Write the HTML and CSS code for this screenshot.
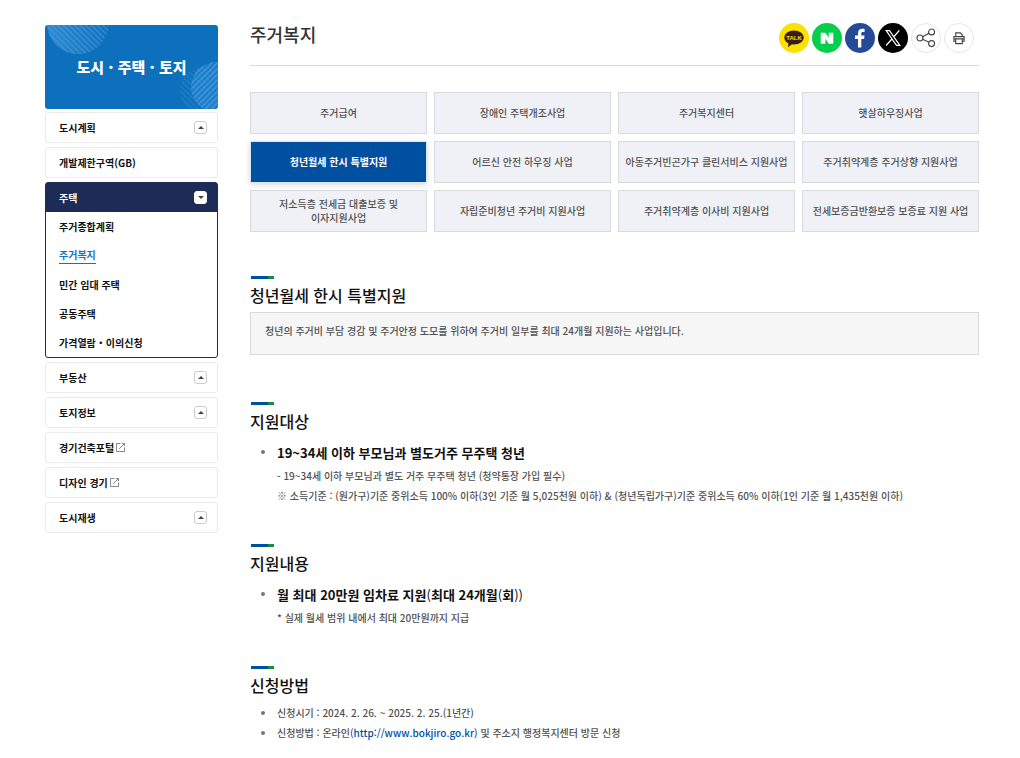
FILE: index.html
```html
<!DOCTYPE html>
<html lang="ko">
<head>
  <meta charset="UTF-8">
  <meta name="viewport" content="width=device-width, initial-scale=1.0">
  <title>주거복지</title>
  <link rel="stylesheet" href="styles.css">
</head>
<body>
  <div class="container">
    <!-- Left menu -->
    <aside class="sidebar">
      <div class="banner">
        <svg class="banner-bg" viewBox="0 0 173 84" preserveAspectRatio="none" aria-hidden="true">
          <defs>
            <pattern id="stripe" width="4" height="4" patternUnits="userSpaceOnUse" patternTransform="rotate(45)">
              <rect width="1.5" height="4" fill="#5eaae6"/>
            </pattern>
            <pattern id="stripeBack" width="4" height="4" patternUnits="userSpaceOnUse" patternTransform="rotate(-45)">
              <rect width="1.5" height="4" fill="#5eaae6"/>
            </pattern>
            <linearGradient id="fade">
              <stop offset="0" stop-color="#3a93d8"/>
              <stop offset="1" stop-color="#0d70bd"/>
            </linearGradient>
          </defs>
          <circle cx="33" cy="-2" r="31" fill="url(#fade)" opacity=".7"/>
          <circle cx="33" cy="-2" r="31" fill="url(#stripeBack)" opacity=".45"/>
          <circle cx="159" cy="66" r="24" fill="url(#stripeBack)" opacity=".25"/>
          <circle cx="171" cy="62" r="25" fill="#2583cf" opacity=".5"/>
          <circle cx="171" cy="62" r="25" fill="url(#stripe)" opacity=".6"/>
        </svg>
        <strong>도시 · 주택 · 토지</strong>
      </div>
      <ul class="menu">
        <li class="item"><a href="#">도시계획</a><button type="button" class="toggle" aria-label="도시계획 펼치기"></button></li>
        <li class="item"><a href="#">개발제한구역(GB)</a></li>
        <li class="group">
          <div class="group-head"><a href="#">주택</a><button type="button" class="toggle down" aria-label="주택 접기"></button></div>
          <ul class="submenu">
            <li><a href="#">주거종합계획</a></li>
            <li><a href="#" class="current">주거복지</a></li>
            <li><a href="#">민간 임대 주택</a></li>
            <li><a href="#">공동주택</a></li>
            <li><a href="#">가격열람・이의신청</a></li>
          </ul>
        </li>
        <li class="item"><a href="#">부동산</a><button type="button" class="toggle" aria-label="부동산 펼치기"></button></li>
        <li class="item"><a href="#">토지정보</a><button type="button" class="toggle" aria-label="토지정보 펼치기"></button></li>
        <li class="item">
          <a href="#">경기건축포털<svg class="ext" viewBox="0 0 10 10" aria-hidden="true"><path d="M5 .5H.5v9h9V5M6.5.5h3v3M9.5.5l-6 6"/></svg></a>
        </li>
        <li class="item">
          <a href="#">디자인 경기<svg class="ext" viewBox="0 0 10 10" aria-hidden="true"><path d="M5 .5H.5v9h9V5M6.5.5h3v3M9.5.5l-6 6"/></svg></a>
        </li>
        <li class="item"><a href="#">도시재생</a><button type="button" class="toggle" aria-label="도시재생 펼치기"></button></li>
      </ul>
    </aside>

    <main class="content">
      <header class="page-head">
        <h1>주거복지</h1>
        <div class="share">
          <a href="#" class="kakao" aria-label="카카오톡">
            <svg viewBox="0 0 30 30">
              <path fill="#3b1c1c" d="M15 7.5c-5.4 0-9.700 3.100-9.700 7 0 2.500 1.700 4.600 4.200 5.900l-.6 3.900 4.100-3c.6.1 1.300.2 2 .2 5.400 0 9.700-3.100 9.700-7s-4.300-7-9.700-7z"/>
              <text x="15" y="17" text-anchor="middle" class="talk">TALK</text>
            </svg>
          </a>
          <a href="#" class="naver" aria-label="네이버">
            <svg viewBox="0 0 30 30"><path fill="#fff" d="M8.700 9.700h4.600l3.400 4.900V9.700h4.600v11h-4.600l-3.400-4.900v4.900H8.700z"/></svg>
          </a>
          <a href="#" class="facebook" aria-label="페이스북">
            <svg viewBox="0 0 30 30"><path fill="#fff" d="M13 24.500v-8.600h-3v-3.400h3v-2.300c0-3 1.800-4.400 4.300-4.400 1.200 0 2 .1 2.300.1v3.100h-1.700c-1.300 0-1.600.7-1.600 1.600v1.900h3.200l-.4 3.400h-2.800v8.600z"/></svg>
          </a>
          <a href="#" class="x" aria-label="X">
            <svg viewBox="0 0 30 30">
              <path fill="none" stroke="#fff" stroke-width="1.2" d="M8.200 7.700h3.300l10.300 14.600h-3.300zM21.300 7.500l-5.700 6.500M13.900 16l-5.800 6.500"/>
            </svg>
          </a>
          <button type="button" aria-label="공유">
            <svg viewBox="0 0 30 30" class="line">
              <circle cx="8.500" cy="15" r="3.200"/><circle cx="21" cy="8.500" r="3.200"/><circle cx="21" cy="21" r="3.200"/>
              <path d="M11.400 13.600l6.800-3.600M11.400 16.400l6.800 3.200"/>
            </svg>
          </button>
          <button type="button" aria-label="인쇄">
            <svg viewBox="0 0 30 30" class="line">
              <path d="M11.500 13.500v-4h5l2 2v2M11.500 18.500h-2v-5h11v5h-2M9.500 16h11M11.500 16v5h7v-5"/>
            </svg>
          </button>
        </div>
      </header>

      <nav class="tabs">
        <a href="#">주거급여</a>
        <a href="#">장애인 주택개조사업</a>
        <a href="#">주거복지센터</a>
        <a href="#">햇살하우징사업</a>
        <a href="#" class="active">청년월세 한시 특별지원</a>
        <a href="#">어르신 안전 하우징 사업</a>
        <a href="#">아동주거빈곤가구 클린서비스 지원사업</a>
        <a href="#">주거취약계층 주거상향 지원사업</a>
        <a href="#">저소득층 전세금 대출보증 및<br>이자지원사업</a>
        <a href="#">자립준비청년 주거비 지원사업</a>
        <a href="#">주거취약계층 이사비 지원사업</a>
        <a href="#">전세보증금반환보증 보증료 지원 사업</a>
      </nav>

      <section>
        <h2>청년월세 한시 특별지원</h2>
        <p class="box">청년의 주거비 부담 경감 및 주거안정 도모를 위하여 주거비 일부를 최대 24개월 지원하는 사업입니다.</p>
      </section>

      <section>
        <h2>지원대상</h2>
        <ul class="list">
          <li class="lead">
            <div>
              <strong>19~34세 이하 부모님과 별도거주 무주택 청년</strong>
              <p>- 19~34세 이하 부모님과 별도 거주 무주택 청년 (청약통장 가입 필수)</p>
              <p>※ 소득기준 : (원가구)기준 중위소득 100% 이하(3인 기준 월 5,025천원 이하) &amp; (청년독립가구)기준 중위소득 60% 이하(1인 기준 월 1,435천원 이하)</p>
            </div>
          </li>
        </ul>
      </section>

      <section>
        <h2>지원내용</h2>
        <ul class="list">
          <li class="lead">
            <div>
              <strong>월 최대 20만원 임차료 지원<span>(</span>최대 24개월<span>(</span>회<span>))</span></strong>
              <p>* 실제 월세 범위 내에서 최대 20만원까지 지급</p>
            </div>
          </li>
        </ul>
      </section>

      <section>
        <h2>신청방법</h2>
        <ul class="list">
          <li><p>신청시기 : 2024. 2. 26. ~ 2025. 2. 25.(1년간)</p></li>
          <li><p>신청방법 : 온라인(<a href="http://www.bokjiro.go.kr">http://www.bokjiro.go.kr</a>) 및 주소지 행정복지센터 방문 신청</p></li>
        </ul>
      </section>
    </main>
  </div>
</body>
</html>
```
FILE: styles.css
```css
* {
  box-sizing: border-box;
}
body {
  margin: 0;
  background: #fff;
  color: #505050;
  font-family: "Noto Sans CJK KR", sans-serif;
  font-size: 10px;
  font-weight: 500;
  line-height: 20px;
}
h1, h2, p, ul {
  margin: 0;
  padding: 0;
}
ul {
  list-style: none;
}
a {
  color: inherit;
  text-decoration: none;
}
button {
  padding: 0;
  background: #fff;
  cursor: pointer;
}

.container {
  display: flex;
  align-items: flex-start;
  gap: 32px;
  padding: 23px 41px 16px 45px;
}

/* Left menu */
.sidebar {
  flex: 0 0 173px;
  padding-top: 2px;
  color: #111;
  font-weight: 700;
}
.banner {
  position: relative;
  display: flex;
  align-items: center;
  justify-content: center;
  height: 84px;
  border-radius: 3px;
  background: #0d70bd;
  color: #fff;
  font-size: 15px;
  overflow: hidden;
}
.banner-bg {
  position: absolute;
  inset: 0;
  width: 100%;
  height: 100%;
}
.banner strong {
  position: relative;
}
.menu {
  display: flex;
  flex-direction: column;
  gap: 4px;
  margin-top: 3px;
}
.item, .group-head {
  display: flex;
  align-items: center;
  justify-content: space-between;
  padding: 0 10px 0 13px;
}
.item {
  height: 31px;
  border: 1px solid #ebebeb;
  border-radius: 3px;
}
.group {
  border: 1px solid #1d2b57;
  border-radius: 3px;
}
.group-head {
  height: 29px;
  background: #1d2b57;
  color: #fff;
}
.submenu {
  padding: 0 13px;
}
.submenu li {
  display: flex;
  align-items: center;
  height: 29px;
}
.submenu a {
  line-height: 16px;
}
.submenu .current {
  color: #1473bf;
  border-bottom: 1px solid #1473bf;
}
.toggle {
  display: flex;
  align-items: center;
  justify-content: center;
  width: 13px;
  height: 13px;
  border: 1px solid #ccc;
  border-radius: 3px;
}
.toggle::before {
  content: "";
  border: 3px solid transparent;
  border-top: 0;
  border-bottom-color: #444;
}
.toggle.down {
  border-color: #fff;
}
.toggle.down::before {
  border-top: 3px solid #444;
  border-bottom: 0;
}
.ext {
  width: 9px;
  height: 9px;
  margin-left: 2px;
  fill: none;
  stroke: #777;
}

/* Title and share icons */
.content {
  flex: 1;
  min-width: 0;
}
.page-head {
  display: flex;
  align-items: flex-start;
  justify-content: space-between;
  padding: 0 5px 12px 0;
  border-bottom: 1px solid #dadada;
}
h1 {
  color: #333;
  font-size: 18px;
  font-weight: 500;
  line-height: 22px;
}
.share {
  display: flex;
  gap: 3px;
}
.share a, .share button {
  width: 30px;
  height: 30px;
  border-radius: 50%;
}
.share button {
  border: 1px solid #e6e6e6;
}
.share svg {
  display: block;
  width: 100%;
  height: 100%;
}
.kakao { background: #fae100; }
.naver { background: #03cf4d; }
.facebook { background: #264b96; }
.x { background: #000; }
.talk {
  fill: #fae100;
  font: bold 6px "Liberation Sans", sans-serif;
}
.line {
  fill: none;
  stroke: #444;
  stroke-width: 1.2;
}

/* Category tabs */
.tabs {
  display: grid;
  grid-template-columns: repeat(4, 1fr);
  gap: 7px;
  margin: 26px 0 44px;
}
.tabs a {
  display: flex;
  align-items: center;
  justify-content: center;
  min-height: 42px;
  border: 1px solid #d9dadc;
  background: #f0f1f6;
  line-height: 14px;
  text-align: center;
}
.tabs .active {
  border-color: #dbe4f0;
  background: #0050a2;
  box-shadow: 0 2px 6px rgba(0, 0, 0, .15);
  color: #fff;
  font-weight: 700;
}

/* Sections */
section {
  margin-bottom: 38px;
}
section:last-child {
  margin-bottom: 0;
}
h2 {
  color: #111;
  font-size: 16px;
  font-weight: 500;
  line-height: 24px;
}
h2::before {
  content: "";
  display: block;
  width: 23px;
  height: 3px;
  margin: 0 0 4px 1px;
  background: linear-gradient(to right, #0050a2 17px, #118f43 17px);
}
.box {
  margin: 5px 0 47px;
  padding: 8px 14px 13px;
  border: 1px solid #d9d9d9;
  background: #f6f6f6;
}
.list {
  padding: 6px 0 0 11px;
}
.list li {
  display: flex;
  gap: 12px;
}
.list li::before {
  content: "";
  flex: none;
  width: 4px;
  height: 4px;
  margin-top: 8px;
  border-radius: 50%;
  background: #777;
}
.list .lead::before {
  margin-top: 11px;
}
.list strong {
  display: block;
  color: #111;
  font-size: 13px;
  font-weight: 700;
  line-height: 27px;
}
.list strong span {
  font-weight: 400;
}
.list a {
  color: #0050a2;
}
```
